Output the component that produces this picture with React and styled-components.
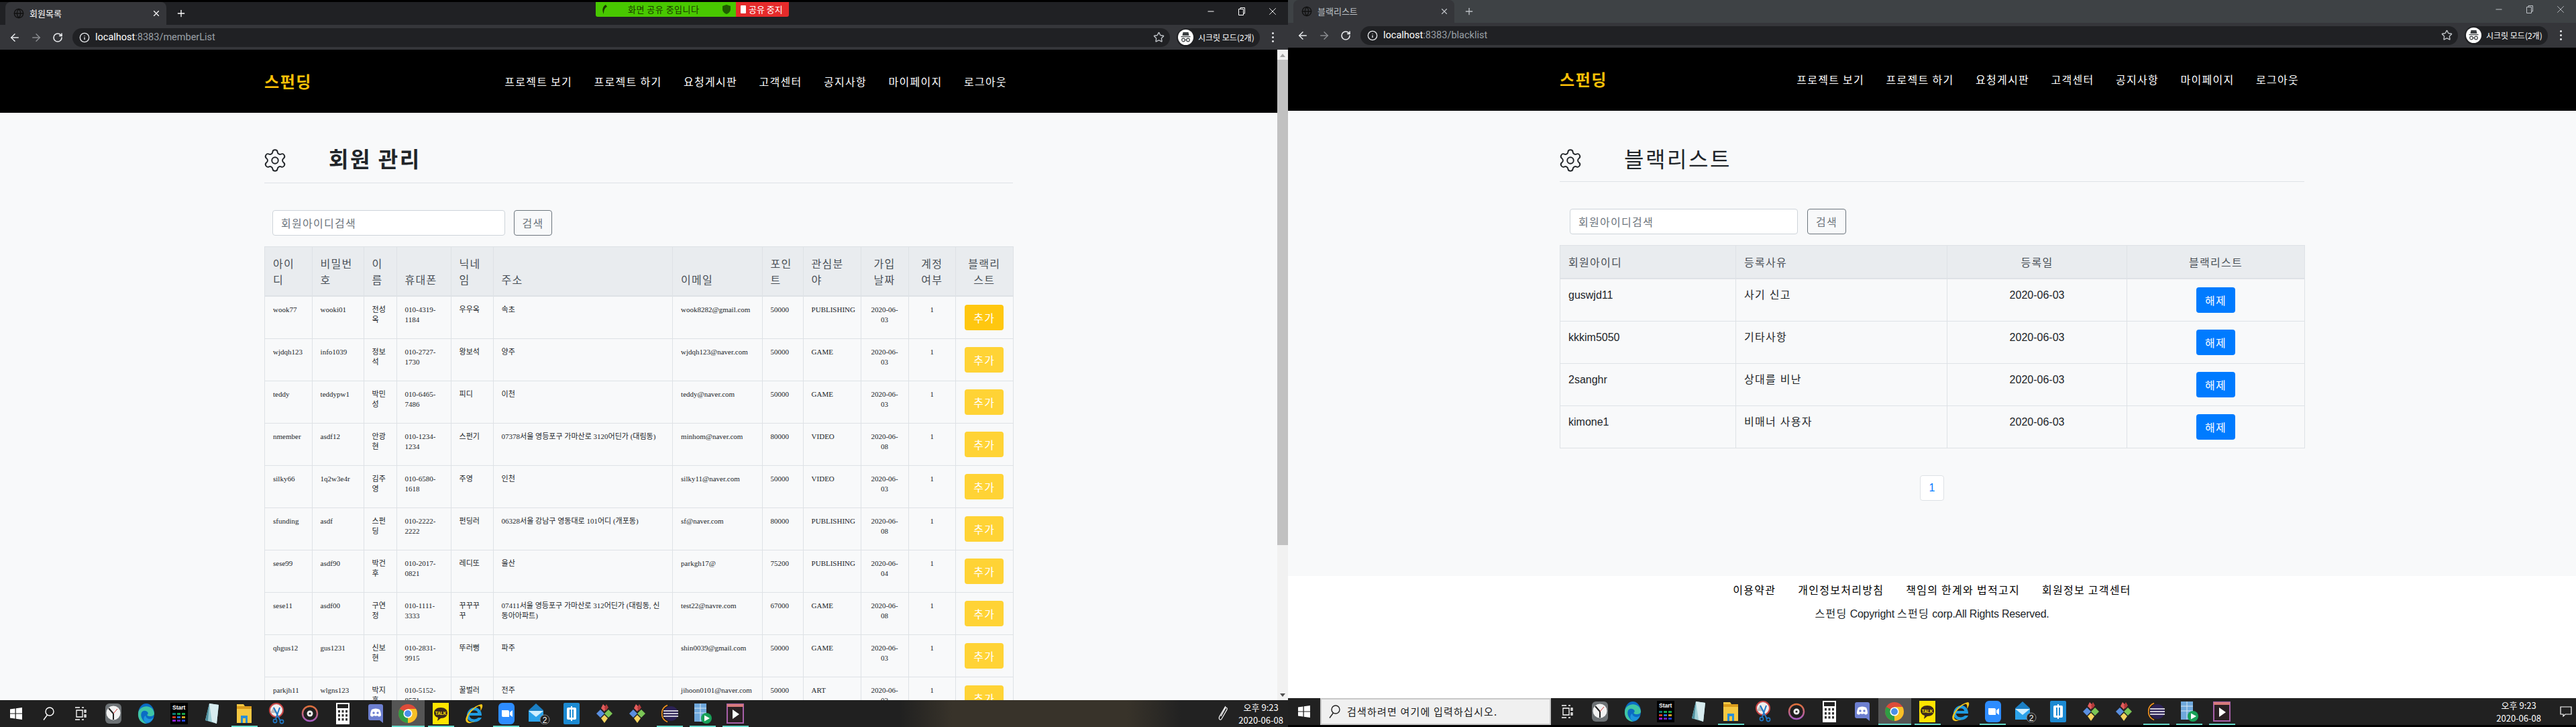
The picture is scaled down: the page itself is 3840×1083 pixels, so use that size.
import React from "react";
import styled, { createGlobalStyle } from "styled-components";
import { ArrowLeft, ArrowRight, RotateCw, Info, Star, Globe, Plus, X, Minus, Settings } from "lucide-react";

const GlobalStyle = createGlobalStyle`
html, body {
  margin:0;
  padding:0;
  background:#000;
}
body {
  font-family:"Liberation Sans","Noto Sans CJK KR",sans-serif;
  font-size:16px;
  line-height:1.5;
}
* {
  box-sizing:border-box;
}
`;

const Screen = styled.div`
display:flex;
width:3840px;
height:1083px;
overflow:hidden;
`;

const Window = styled.section`
position:relative;
display:flex;
flex-direction:column;
width:1920px;
height:1083px;
padding-top:${p => p.$top}px;
padding-bottom:${p => p.$bottom}px;
background:#000;
`;

const TabStrip = styled.div`
display:flex;
align-items:flex-end;
flex:none;
height:34px;
padding-left:8px;
background:${p => p.$bg};
color:${p => p.$fg};
`;

const Tab = styled.div`
display:flex;
align-items:center;
gap:8px;
width:240px;
height:34px;
padding:0 8px 0 12px;
border-radius:8px 8px 0 0;
background:#35363a;
font-family:"Noto Sans CJK KR",sans-serif;
font-size:13px;
`;

const TabClose = styled.span`
display:flex;
margin-left:auto;
`;

const NewTab = styled.span`
display:flex;
align-self:center;
margin-left:14px;
`;

const WindowButtons = styled.div`
display:flex;
align-self:flex-start;
margin-left:auto;
`;

const WindowButton = styled.span`
display:flex;
align-items:center;
justify-content:center;
width:46px;
height:28px;
`;

const Toolbar = styled.div`
display:flex;
align-items:center;
flex:none;
height:37px;
padding:0 4px 0 6px;
background:#35363a;
color:#e8eaed;
`;

const ToolButton = styled.span`
display:flex;
align-items:center;
justify-content:center;
width:32px;
color:${p => p.$dim ? "#8a8c90" : "#e8eaed"};
`;

const Omnibox = styled.div`
display:flex;
align-items:center;
flex:1;
height:28px;
margin-left:6px;
padding:0 8px 0 10px;
border-radius:14px;
background:#202124;
`;

const Address = styled.span`
margin-left:8px;
font-family:"Roboto",sans-serif;
font-size:14.5px;
color:#fff;
`;

const AddressRest = styled.span`
color:#9aa0a6;
`;

const StarWrap = styled.span`
display:flex;
margin-left:auto;
color:#bdc1c6;
`;

const IncognitoPill = styled.div`
display:flex;
align-items:center;
gap:7px;
width:124px;
height:28px;
margin-left:10px;
padding-left:2px;
border-radius:14px;
background:#202124;
font-family:"Noto Sans CJK KR",sans-serif;
font-size:12px;
white-space:nowrap;
color:#fff;
`;

const MenuDots = styled.span`
display:flex;
flex-direction:column;
align-items:center;
gap:3px;
width:38px;
`;

const Dot = styled.i`
width:3px;
height:3px;
border-radius:50%;
background:#e8eaed;
`;

const ShareBanner = styled.div`
position:absolute;
top:3px;
left:888px;
display:flex;
height:22px;
font-family:"Noto Sans CJK KR",sans-serif;
font-size:13px;
line-height:22px;
`;

const ShareStatus = styled.div`
display:flex;
align-items:center;
width:209px;
padding:0 8px;
border-radius:0 0 0 3px;
background:#48c800;
color:#1b3a00;
`;

const ShareText = styled.span`
margin-left:30px;
letter-spacing:.5px;
`;

const ShareStop = styled.div`
display:flex;
align-items:center;
gap:4px;
width:79px;
padding-left:7px;
border-radius:0 0 3px 0;
background:#e52b2b;
color:#fff;
`;

const StopSquare = styled.i`
width:8px;
height:12px;
border-radius:1px;
background:#fff;
`;

const Viewport = styled.div`
display:flex;
flex:1;
min-height:0;
overflow:hidden;
`;

const Page = styled.main`
display:flex;
flex-direction:column;
flex:1;
min-width:0;
background:#f8f9fa;
`;

const NavBar = styled.header`
display:flex;
align-items:center;
flex:none;
height:94px;
padding:0 ${p => p.$right}px 0 ${p => p.$left}px;
background:#000;
`;

const Logo = styled.a`
font-family:"Noto Sans CJK KR",sans-serif;
font-size:24px;
font-weight:700;
letter-spacing:1.6px;
color:#ffc107;
`;

const NavLinks = styled.nav`
display:flex;
gap:32.5px;
margin-left:auto;
`;

const NavLink = styled.a`
font-family:"Noto Sans CJK KR",sans-serif;
letter-spacing:.08em;
white-space:nowrap;
color:#fff;
`;

const Content = styled.div`
flex:none;
width:${p => p.$width}px;
margin:${p => p.$top}px 0 0 ${p => p.$left}px;
`;

const Heading = styled.div`
display:flex;
align-items:flex-start;
height:${p => p.$height}px;
border-bottom:1px solid #dee2e6;
color:#212529;
`;

const GearWrap = styled.span`
display:flex;
margin:4px 61px 0 -3px;
`;

const Title = styled.h2`
margin:0;
font-family:"Noto Sans CJK KR",sans-serif;
font-size:32px;
font-weight:${p => p.$bold ? 700 : 400};
line-height:38px;
letter-spacing:.08em;
`;

const SearchRow = styled.form`
display:flex;
gap:${p => p.$gap}px;
margin:40px 0 16px;
padding-left:${p => p.$inset}px;
`;

const SearchInput = styled.div`
width:${p => p.$width}px;
height:38px;
padding:6px 12px;
border:1px solid #ced4da;
border-radius:4px;
background:#fff;
font-family:"Noto Sans CJK KR",sans-serif;
letter-spacing:.08em;
color:#6c757d;
`;

const SearchButton = styled.button`
width:${p => p.$width}px;
height:38px;
padding:0;
border:1px solid #6c757d;
border-radius:4px;
background:transparent;
font-family:"Noto Sans CJK KR",sans-serif;
font-size:16px;
letter-spacing:.08em;
color:#6c757d;
`;

const Table = styled.table`
width:100%;
table-layout:fixed;
border-collapse:collapse;
color:#212529;
`;

const Th = styled.th`
padding:12px;
border:1px solid #dee2e6;
border-bottom:2px solid #dee2e6;
background:#e9ecef;
font-family:"Noto Sans CJK KR",sans-serif;
font-weight:400;
line-height:24px;
letter-spacing:.08em;
vertical-align:bottom;
text-align:${p => p.$center ? "center" : "left"};
color:#495057;
`;

const Td = styled.td`
padding:12px;
border:1px solid #dee2e6;
vertical-align:top;
text-align:${p => p.$center ? "center" : "left"};
`;

const SmallTd = styled(Td)`
font-family:"Liberation Serif","Noto Sans CJK KR",serif;
font-size:11px;
line-height:15px;
`;

const WideTd = styled(Td)`
font-family:"Liberation Sans","Noto Sans CJK KR",sans-serif;
letter-spacing:${p => p.$ko ? ".08em" : "0"};
line-height:24px;
`;

const ActionButton = styled.button`
display:block;
width:58px;
height:38px;
margin:0 auto;
padding:0;
border:0;
border-radius:4px;
background:${p => p.$bg};
font-family:"Noto Sans CJK KR",sans-serif;
font-size:16px;
letter-spacing:.08em;
color:#fff;
`;

const Pagination = styled.div`
display:flex;
justify-content:center;
margin-top:40px;
`;

const PageItem = styled.a`
width:36px;
height:38px;
border:1px solid #dee2e6;
border-radius:4px;
background:#fff;
line-height:36px;
text-align:center;
color:#007bff;
`;

const Footer = styled.footer`
flex:1;
margin-top:112px;
padding-top:8px;
background:#fff;
`;

const FooterLinks = styled.div`
display:flex;
justify-content:center;
gap:33px;
color:#000;
`;

const Copyright = styled.p`
margin:11px 0 0;
letter-spacing:-.25px;
text-align:center;
color:#212529;
`;

const Ko = styled.span`
font-family:"Noto Sans CJK KR",sans-serif;
letter-spacing:.08em;
`;

const Scrollbar = styled.div`
display:flex;
flex-direction:column;
align-items:center;
flex:none;
width:16px;
background:#f1f1f1;
`;

const ScrollArrow = styled.i`
flex:none;
width:0;
height:0;
margin:${p => p.$up ? "6px 0 4px" : "auto 0 5px"};
border-left:4px solid transparent;
border-right:4px solid transparent;
border-bottom:${p => p.$up ? "5px solid #a3a3a3" : "0"};
border-top:${p => p.$up ? "0" : "5px solid #505050"};
`;

const ScrollThumb = styled.div`
flex:none;
width:100%;
height:723px;
background:#c1c1c1;
`;

const Taskbar = styled.footer`
display:flex;
align-items:center;
flex:none;
height:40px;
color:#fff;
background:${p => p.$glow
    ? "linear-gradient(90deg,#202020 0,#202020 1340px,#38332a 1420px,#38332a 1680px,#222 1760px)"
    : "#212121"};
`;

const Slot = styled.span`
position:relative;
display:flex;
align-items:center;
justify-content:center;
flex:none;
width:${p => p.$width || 48.8}px;
height:40px;
background:${p => p.$current ? "#555" : "transparent"};
&::after {
  content:"";
  position:absolute;
  left:${p => p.$current ? 0 : 5}px;
  right:${p => p.$current ? 0 : 5}px;
  bottom:0;
  height:${p => p.$open ? 2 : 0}px;
  background:#66d9c9;
}
`;

const SearchBox = styled.div`
display:flex;
align-items:center;
gap:9px;
flex:none;
width:344px;
height:40px;
padding-left:9px;
border:2px solid #c8c8c8;
background:#f0f0f0;
font-family:"Noto Sans CJK KR",sans-serif;
font-size:15px;
letter-spacing:.08em;
color:#1b1b1b;
`;

const Tray = styled.div`
display:flex;
align-items:center;
gap:${p => p.$gap}px;
margin-left:auto;
padding-right:${p => p.$right}px;
`;

const TrayClock = styled.div`
font-family:"Noto Sans CJK KR",sans-serif;
font-size:13px;
line-height:19px;
text-align:center;
white-space:nowrap;
`;

const NAV_ITEMS = ["프로젝트 보기", "프로젝트 하기", "요청게시판", "고객센터", "공지사항", "마이페이지", "로그아웃"];

const MEMBER_COLS = [70.6, 77, 49, 81, 63, 267.5, 133.5, 61, 86, 71, 70.5, 85.5];

const MEMBER_HEAD = [
  ["아이디"], ["비밀번호"], ["이름"], ["휴대폰"], ["닉네임"], ["주소"], ["이메일"], ["포인트"], ["관심분야"],
  ["가입 날짜", true], ["계정 여부", true], ["블랙리스트", true],
];

const MEMBERS = [
  ["wook77", "wooki01", "전성옥", "010-4319-1184", "우우옥", "속초", "wook8282@gmail.com", "50000", "PUBLISHING", "2020-06-03"],
  ["wjdqh123", "info1039", "정보석", "010-2727-1730", "왕보석", "양주", "wjdqh123@naver.com", "50000", "GAME", "2020-06-03"],
  ["teddy", "teddypw1", "박민성", "010-6465-7486", "피디", "이천", "teddy@naver.com", "50000", "GAME", "2020-06-03"],
  ["nmember", "asdf12", "안광현", "010-1234-1234", "스펀기", "07378서울 영등포구 가마산로 3120어딘가 (대림동)", "minhom@naver.com", "80000", "VIDEO", "2020-06-08"],
  ["silky66", "1q2w3e4r", "김주영", "010-6580-1618", "주영", "인천", "silky11@naver.com", "50000", "VIDEO", "2020-06-03"],
  ["sfunding", "asdf", "스펀딩", "010-2222-2222", "펀딩러", "06328서울 강남구 영동대로 101어디 (개포동)", "sf@naver.com", "80000", "PUBLISHING", "2020-06-08"],
  ["sese99", "asdf90", "박건후", "010-2017-0821", "레디또", "울산", "parkgh17@", "75200", "PUBLISHING", "2020-06-04"],
  ["sese11", "asdf00", "구연정", "010-1111-3333", "꾸꾸꾸꾸", "07411서울 영등포구 가마산로 312어딘가 (대림동, 신동아아파트)", "test22@navre.com", "67000", "GAME", "2020-06-08"],
  ["qhgus12", "gus1231", "신보현", "010-2831-9915", "뚜러뻥", "파주", "shin0039@gmail.com", "50000", "GAME", "2020-06-03"],
  ["parkjh11", "wlgns123", "박지훈", "010-5152-8571", "꿀벌러", "전주", "jihoon0101@naver.com", "50000", "ART", "2020-06-03"],
];

const BLACKLIST_COLS = [262, 315, 268, 265];

const BLACKLIST = [
  ["guswjd11", "사기 신고"],
  ["kkkim5050", "기타사항"],
  ["2sanghr", "상대를 비난"],
  ["kimone1", "비매너 사용자"],
];

const FOOTER_LINKS = ["이용약관", "개인정보처리방침", "책임의 한계와 법적고지", "회원정보 고객센터"];

// taskbar pictures, all on a 32 unit square
const TaskIcon = ({ name }) => {
  switch (name) {
    case "win":
      return (
        <svg width="20" height="20" viewBox="0 0 20 20">
          <path d="M1 3.5 8.5 2.4V9.4H1ZM9.8 2.2 19 1V9.4H9.8ZM1 10.6H8.5V17.6L1 16.5ZM9.8 10.6H19V19L9.8 17.8Z" fill="#fff" />
        </svg>
      );
    case "search":
      return (
        <svg width="20" height="22" viewBox="0 0 20 22" fill="none" stroke={"#fff"} strokeWidth="1.4">
          <circle cx="12" cy="8" r="6" />
          <path d="M8.5 13 3 20.5" />
        </svg>
      );
    case "searchDark":
      return (
        <svg width="20" height="22" viewBox="0 0 20 22" fill="none" stroke={"#222"} strokeWidth="1.4">
          <circle cx="12" cy="8" r="6" />
          <path d="M8.5 13 3 20.5" />
        </svg>
      );
    case "tasks":
      return (
        <svg width="18" height="20" viewBox="0 0 18 20" fill="none" stroke="#fff" strokeWidth="1.3">
          <path d="M1 1H8M1 19H8M11 1h3M11 19h3M3 5H12V15H3ZM15 5h2V8h-2ZM15 12h2v3h-2Z" />
        </svg>
      );
    case "clock":
      return (
        <svg width="26" height="32" viewBox="0 0 26 32">
          <rect x="1" y="1" width="24" height="30" rx="6" fill="#6d7275" />
          <circle cx="13" cy="15" r="10.5" fill="#f2f2f2" />
          <path d="M13 16 6 8M13 16V25" stroke="#222" strokeWidth="2" />
          <path d="M13 16 19 9" stroke="#c33" strokeWidth="1" />
        </svg>
      );
    case "edge":
      return (
        <svg width="26" height="32" viewBox="0 0 26 32">
          <ellipse cx="13" cy="16" rx="12" ry="15" fill="#0b6cc4" />
          <path d="M1 15C3 3 23 1 25 16 25 21 15 21 14 18 19 15 12 9 7 13 3 17 6 27 14 31 5 31 0 24 1 15Z" fill="#3fc5a5" />
          <path d="M12 19C13 24 19 26 24 22 21 29 15 31 12 29 8 27 9 20 12 19Z" fill="#1d95dd" />
        </svg>
      );
    case "start":
      return (
        <svg width="26" height="32" viewBox="0 0 26 32">
          <rect width="26" height="32" fill="#000" />
          <text x="3" y="10" fontSize="8.5" fontFamily="Liberation Sans" fontWeight="700" fill="#fff">Start</text>
          <path d="M3 15h5v3H3z" fill="#0a7c76" />
          <path d="M10 15h5v3h-5z" fill="#16a34a" />
          <path d="M17 15h5v3h-5z" fill="#16a34a" />
          <path d="M3 20h5v3H3z" fill="#d13a1f" />
          <path d="M10 20h5v3h-5z" fill="#1f6fd1" />
          <path d="M17 20h5v3h-5z" fill="#d1a11f" />
          <path d="M3 25h5v3H3z" fill="#8a1fd1" />
          <path d="M10 25h5v3h-5z" fill="#6a1fb5" />
          <path d="M17 25h5v3h-5z" fill="#1f3fd1" />
        </svg>
      );
    case "notepad":
      return (
        <svg width="24" height="32" viewBox="0 0 24 32">
          <path d="M8 1 22 3 19 31 2 26Z" fill="#9fcfd6" />
          <path d="M8 1 22 3 19 31 12 28Z" fill="#d8ecef" />
          <path d="M8 1 2 26 6 27Z" fill="#4e8f9e" />
        </svg>
      );
    case "explorer":
      return (
        <svg width="24" height="30" viewBox="0 0 24 30">
          <path d="M1 1H11L13 4H23V29H1Z" fill="#f5c842" />
          <path d="M1 4H23V8H1Z" fill="#d99b1c" />
          <path d="M7 29V18H17V29H14V22H10V29Z" fill="#2a8fd8" />
        </svg>
      );
    case "snip":
      return (
        <svg width="26" height="32" viewBox="0 0 26 32">
          <circle cx="12" cy="11" r="10" fill="#eee" stroke="#c94444" strokeWidth="2" />
          <path d="M3 15 8 6 14 15Z" fill="#bbb" />
          <path d="M8 7 18 27M17 7 11 24" stroke="#1f78c8" strokeWidth="2" fill="none" />
          <circle cx="20" cy="28" r="2.6" fill="none" stroke="#1f78c8" strokeWidth="1.6" />
          <circle cx="10" cy="27" r="2.6" fill="none" stroke="#1f78c8" strokeWidth="1.6" />
        </svg>
      );
    case "groove":
      return (
        <svg width="26" height="32" viewBox="0 0 26 32">
          <defs>
            <linearGradient id="grooveRing" x1="0" y1="0" x2="0" y2="1">
              <stop offset="0" stopColor="#e07038" />
              <stop offset="1" stopColor="#a55bc2" />
            </linearGradient>
          </defs>
          <circle cx="13" cy="16" r="11" fill="#1f1f1f" stroke="url(#grooveRing)" strokeWidth="2.5" />
          <circle cx="13" cy="16" r="4.5" fill="#eee" />
          <circle cx="13" cy="16" r="1.6" fill="#222" />
        </svg>
      );
    case "calc":
      return (
        <svg width="20" height="32" viewBox="0 0 20 32">
          <rect width="20" height="32" fill="#fff" />
          <rect x="2" y="2" width="16" height="6" fill="#222" />
          {[11, 17, 23].map(y => [3, 8.5, 14].map(x => <rect key={`${x}${y}`} x={x} y={y} width="3" height="3.5" fill="#333" />))}
        </svg>
      );
    case "discord":
      return (
        <svg width="24" height="30" viewBox="0 0 24 30">
          <path d="M4 1H20C22 1 23 2 23 4V29L18 25H4C2 25 1 24 1 22V4C1 2 2 1 4 1Z" fill="#6d7fd0" />
          <path d="M6 9C10 7 14 7 18 9 20 13 20 16 20 18 18 20 16 20 15 18 13 19 11 19 9 18 8 20 6 20 4 18 4 16 4 13 6 9Z" fill="#fff" />
          <circle cx="9" cy="14" r="1.7" fill="#6d7fd0" />
          <circle cx="15" cy="14" r="1.7" fill="#6d7fd0" />
        </svg>
      );
    case "chrome":
      return (
        <svg width="30" height="32" viewBox="0 0 30 32">
          <circle cx="15" cy="16" r="14" fill="#dd4b39" />
          <path d="M15 16 2.9 9A14 14 0 0 0 15 30L22 18Z" fill="#2f9e44" />
          <path d="M15 16 15 30A14 14 0 0 0 27.1 9H15Z" fill="#f6c026" />
          <circle cx="15" cy="16" r="6.6" fill="#fff" />
          <circle cx="15" cy="16" r="5" fill="#4a8fe8" />
        </svg>
      );
    case "kakao":
      return (
        <svg width="24" height="32" viewBox="0 0 24 32">
          <rect width="24" height="32" fill="#ffe400" />
          <path d="M12 7C18 7 22 10 22 15 22 20 18 23 12 23L7 27 8 22C4 21 2 18 2 15 2 10 6 7 12 7Z" fill="#3b2a1d" />
          <text x="12" y="17.5" fontSize="6.4" fontFamily="Liberation Sans" fontWeight="700" textAnchor="middle" fill="#ffe400">TALK</text>
        </svg>
      );
    case "ie":
      return (
        <svg width="28" height="32" viewBox="0 0 28 32" fill="none">
          <path d="M22 19H8C8 25 17 26 21 22H26C22 31 6 31 4 21 3 12 10 6 17 7 23 8 26 13 26 19Z" fill="#1f9be0" />
          <path d="M9 15H20C20 10 10 10 9 15Z" fill="#212121" />
          <path d="M3 28C-1 22 12 4 26 2 29 4 26 10 24 12 25 7 24 4 21 5 12 9 2 22 6 27 9 30 13 28 16 27 10 31 5 31 3 28Z" fill="#f5c518" />
        </svg>
      );
    case "zoom":
      return (
        <svg width="24" height="32" viewBox="0 0 24 32">
          <rect width="24" height="32" rx="6" fill="#2d8cff" />
          <path d="M5 11H14C15.500 11 16 12 16 13V21H7C5.500 21 5 20 5 19ZM17 14 21 11V21L17 18Z" fill="#fff" />
        </svg>
      );
    case "mail":
      return (
        <svg width="34" height="32" viewBox="0 0 34 32">
          <path d="M1 11 12 1 23 11V28H1Z" fill="#1b7fc4" />
          <path d="M1 12H23V28H1Z" fill="#2ba2ea" />
          <path d="M1 12 12 21 23 12" fill="#cfeeff" />
          <circle cx="25" cy="25" r="7" fill="#212121" stroke="#8a8a8a" strokeWidth="1" />
          <text x="25" y="29.500" fontSize="12" fontFamily="Liberation Sans" textAnchor="middle" fill="#fff">2</text>
        </svg>
      );
    case "bracket":
      return (
        <svg width="24" height="32" viewBox="0 0 24 32">
          <rect width="24" height="32" rx="2" fill="#1c8ad2" />
          <rect x="5" y="7" width="14" height="18" rx="2" fill="#fff" />
          <rect x="9" y="10" width="6" height="12" fill="#1c8ad2" />
          <rect x="11" y="5" width="2" height="22" fill="#fff" />
        </svg>
      );
    case "git":
      return (
        <svg width="24" height="32" viewBox="0 0 24 32">
          <path d="M6 10 12 16 6 22 0 16Z" fill="#5a8fe0" />
          <path d="M18 10 24 16 18 22 12 16Z" fill="#7cc656" />
          <path d="M12 18 17 23 12 30 7 23Z" fill="#f4d35e" />
          <path d="M10 2 15 7 12 13 7 8Z" fill="#e35d5d" />
          <path d="M15 2 18 7 14 12 12 7Z" fill="#b33a3a" />
        </svg>
      );
    case "eclipse":
      return (
        <svg width="26" height="32" viewBox="0 0 26 32" fill="none">
          <circle cx="14" cy="16" r="11" fill="#2c2255" />
          <path d="M3 12H25M3 16H25M3 20H25" stroke="#fff" strokeWidth="1.6" />
          <path d="M9 3.500A13.500 13.500 0 0 0 9 28.500" stroke="#f7941e" strokeWidth="1.6" />
        </svg>
      );
    case "runner":
      return (
        <svg width="30" height="32" viewBox="0 0 30 32">
          <rect x="2" y="1" width="18" height="27" fill="#6fa8dc" />
          <path d="M2 8H20M2 15H20M11 1V28" stroke="#d8e8f5" strokeWidth="1" />
          <circle cx="20" cy="23" r="8" fill="#18a058" />
          <path d="M17 18.500 25 23 17 27.500Z" fill="#fff" />
        </svg>
      );
    case "video":
      return (
        <svg width="26" height="32" viewBox="0 0 26 32">
          <rect x="1" y="2" width="24" height="28" fill="#2a2023" stroke="#a65fa8" strokeWidth="2" />
          <path d="M1 2H25V6H1Z" fill="#d77a7a" />
          <path d="M9 10 19 17 9 24Z" fill="#fff" />
        </svg>
      );
    default:
      return null;
  }
};

const TASK_APPS = [
  { name: "tasks" }, { name: "clock" }, { name: "edge" }, { name: "start" }, { name: "notepad" },
  { name: "explorer", open: true }, { name: "snip" }, { name: "groove" }, { name: "calc" }, { name: "discord" },
  { name: "chrome", open: true, current: true }, { name: "kakao", open: true }, { name: "ie" },
  { name: "zoom", open: true }, { name: "mail" }, { name: "bracket" }, { name: "git" }, { name: "git" },
  { name: "eclipse", open: true }, { name: "runner", open: true }, { name: "video", open: true },
];

const AppSlots = () => TASK_APPS.map((app, i) => (
  <Slot key={i} $open={app.open} $current={app.current}>
    <TaskIcon name={app.name} />
  </Slot>
));

const IncognitoFace = () => (
  <svg width="23" height="23" viewBox="0 0 23 23">
    <circle cx="11.5" cy="11.5" r="11.5" fill="#fff" />
    <path d="M7.500 4H15.500L16.500 9H6.500ZM4.500 10H18.500V11.300H4.500Z" fill="#3c4043" />
    <circle cx="8" cy="15.500" r="2.300" fill="none" stroke="#3c4043" strokeWidth="1.2" />
    <circle cx="15" cy="15.500" r="2.300" fill="none" stroke="#3c4043" strokeWidth="1.2" />
    <path d="M10.300 15.500H12.700" stroke="#3c4043" strokeWidth="1.2" />
  </svg>
);

const Chrome = ({ title, path, stripBg, stripFg }) => (
  <>
    <TabStrip $bg={stripBg} $fg={stripFg}>
      <Tab>
        <Globe size={16} color="#111" />
        {title}
        <TabClose><X size={14} /></TabClose>
      </Tab>
      <NewTab><Plus size={16} /></NewTab>
      <WindowButtons>
        <WindowButton><Minus size={14} /></WindowButton>
        <WindowButton>
          <svg width="12" height="14" viewBox="0 0 12 14" fill="none" stroke="currentColor">
            <path d="M1.500 3.500H8.500V12.500H1.500ZM4 3.500V1.500H10.500V10H8.500" />
          </svg>
        </WindowButton>
        <WindowButton><X size={18} strokeWidth={1.2} /></WindowButton>
      </WindowButtons>
    </TabStrip>
    <Toolbar>
      <ToolButton><ArrowLeft size={18} /></ToolButton>
      <ToolButton $dim><ArrowRight size={18} /></ToolButton>
      <ToolButton><RotateCw size={16} strokeWidth={2.4} /></ToolButton>
      <Omnibox>
        <Info size={16} color="#e8eaed" />
        <Address>localhost<AddressRest>:8383/{path}</AddressRest></Address>
        <StarWrap><Star size={17} /></StarWrap>
      </Omnibox>
      <IncognitoPill>
        <IncognitoFace />
        시크릿 모드(2개)
      </IncognitoPill>
      <MenuDots><Dot /><Dot /><Dot /></MenuDots>
    </Toolbar>
  </>
);

const SiteNav = ({ left, right }) => (
  <NavBar $left={left} $right={right}>
    <Logo>스펀딩</Logo>
    <NavLinks>
      {NAV_ITEMS.map(item => <NavLink key={item}>{item}</NavLink>)}
    </NavLinks>
  </NavBar>
);

const MemberPage = () => (
  <Page>
    <SiteNav left={394} right={403} />
    <Content $left={394} $top={48} $width={1115.5}>
      <Heading $height={57}>
        <GearWrap><Settings size={38} strokeWidth={1.2} /></GearWrap>
        <Title $bold>회원 관리</Title>
      </Heading>
      <SearchRow $gap={13} $inset={12}>
        <SearchInput $width={347}>회원아이디검색</SearchInput>
        <SearchButton type="button" $width={57}>검색</SearchButton>
      </SearchRow>
      <Table>
        <colgroup>
          {MEMBER_COLS.map((w, i) => <col key={i} width={w} />)}
        </colgroup>
        <thead>
          <tr>
            {MEMBER_HEAD.map(([label, center]) => <Th key={label} $center={center}>{label}</Th>)}
          </tr>
        </thead>
        <tbody>
          {MEMBERS.map((m, i) => (
            <tr key={m[0]}>
              {m.slice(0, 9).map((v, j) => <SmallTd key={j}>{v}</SmallTd>)}
              <SmallTd $center>{m[9]}</SmallTd>
              <SmallTd $center>1</SmallTd>
              <SmallTd $center>
                <ActionButton type="button" $bg={i === 0 ? "#ffc70f" : "#ffd335"}>추가</ActionButton>
              </SmallTd>
            </tr>
          ))}
        </tbody>
      </Table>
    </Content>
  </Page>
);

const BlacklistPage = () => (
  <Page>
    <SiteNav left={405} right={413} />
    <Content $left={405} $top={51} $width={1110}>
      <Heading $height={55}>
        <GearWrap><Settings size={38} strokeWidth={1.2} /></GearWrap>
        <Title>블랙리스트</Title>
      </Heading>
      <SearchRow $gap={14} $inset={15}>
        <SearchInput $width={340}>회원아이디검색</SearchInput>
        <SearchButton type="button" $width={58}>검색</SearchButton>
      </SearchRow>
      <Table>
        <colgroup>
          {BLACKLIST_COLS.map((w, i) => <col key={i} width={w} />)}
        </colgroup>
        <thead>
          <tr>
            <Th>회원아이디</Th>
            <Th>등록사유</Th>
            <Th $center>등록일</Th>
            <Th $center>블랙리스트</Th>
          </tr>
        </thead>
        <tbody>
          {BLACKLIST.map(([id, reason]) => (
            <tr key={id}>
              <WideTd>{id}</WideTd>
              <WideTd $ko>{reason}</WideTd>
              <WideTd $center>2020-06-03</WideTd>
              <WideTd $center>
                <ActionButton type="button" $bg="#007bff">해제</ActionButton>
              </WideTd>
            </tr>
          ))}
        </tbody>
      </Table>
      <Pagination><PageItem>1</PageItem></Pagination>
    </Content>
    <Footer>
      <FooterLinks>
        {FOOTER_LINKS.map(link => <Ko key={link}>{link}</Ko>)}
      </FooterLinks>
      <Copyright>
        <Ko>스펀딩</Ko> Copyright <Ko>스펀딩</Ko> corp.All Rights Reserved.
      </Copyright>
    </Footer>
  </Page>
);

const App = () => (
  <Screen>
    <GlobalStyle />
    <Window $top={3} $bottom={0}>
      <Chrome title="회원목록" path="memberList" stripBg="#202124" stripFg="#fff" />
      <ShareBanner>
        <ShareStatus>
          <svg width="10" height="14" viewBox="0 0 10 14"><path d="M7 0C2 3 1 8 4 14 4 9 5 5 9 3Z" fill="#1b3a00" /></svg>
          <ShareText>화면 공유 중입니다</ShareText>
          <svg style={{ marginLeft: "auto" }} width="12" height="14" viewBox="0 0 12 14">
            <path d="M6 0 12 2V7C12 10 9 13 6 14 3 13 0 10 0 7V2Z" fill="#1f5c00" />
          </svg>
        </ShareStatus>
        <ShareStop>
          <StopSquare />
          공유 중지
        </ShareStop>
      </ShareBanner>
      <Viewport>
        <MemberPage />
        <Scrollbar>
          <ScrollArrow $up />
          <ScrollThumb />
          <ScrollArrow />
        </Scrollbar>
      </Viewport>
      <Taskbar $glow>
        <Slot $width={48}><TaskIcon name="win" /></Slot>
        <Slot $width={48}><TaskIcon name="search" /></Slot>
        <AppSlots />
        <Tray $gap={14} $right={7}>
          <svg width="18" height="26" viewBox="0 0 18 26" fill="none" stroke="#fff" strokeWidth="1.2">
            <path d="M13 2 4 17C2 21 5 24 7 21L15 7C16 4 13 3 12 6L6 17" />
          </svg>
          <TrayClock>오후 9:23<br />2020-06-08</TrayClock>
        </Tray>
      </Taskbar>
    </Window>
    <Window $top={0} $bottom={3}>
      <Chrome title="블랙리스트" path="blacklist" stripBg="#3e4245" stripFg="#bdc1c6" />
      <Viewport>
        <BlacklistPage />
      </Viewport>
      <Taskbar>
        <Slot $width={48}><TaskIcon name="win" /></Slot>
        <SearchBox>
          <TaskIcon name="searchDark" />
          검색하려면 여기에 입력하십시오.
        </SearchBox>
        <AppSlots />
        <Tray $gap={28} $right={6}>
          <TrayClock>오후 9:23<br />2020-06-08</TrayClock>
          <svg width="18" height="16" viewBox="0 0 18 16" fill="none" stroke="#fff" strokeWidth="1.2">
            <path d="M1 1H17V12H8L5 15V12H1Z" />
          </svg>
        </Tray>
      </Taskbar>
    </Window>
  </Screen>
);

export default App;
